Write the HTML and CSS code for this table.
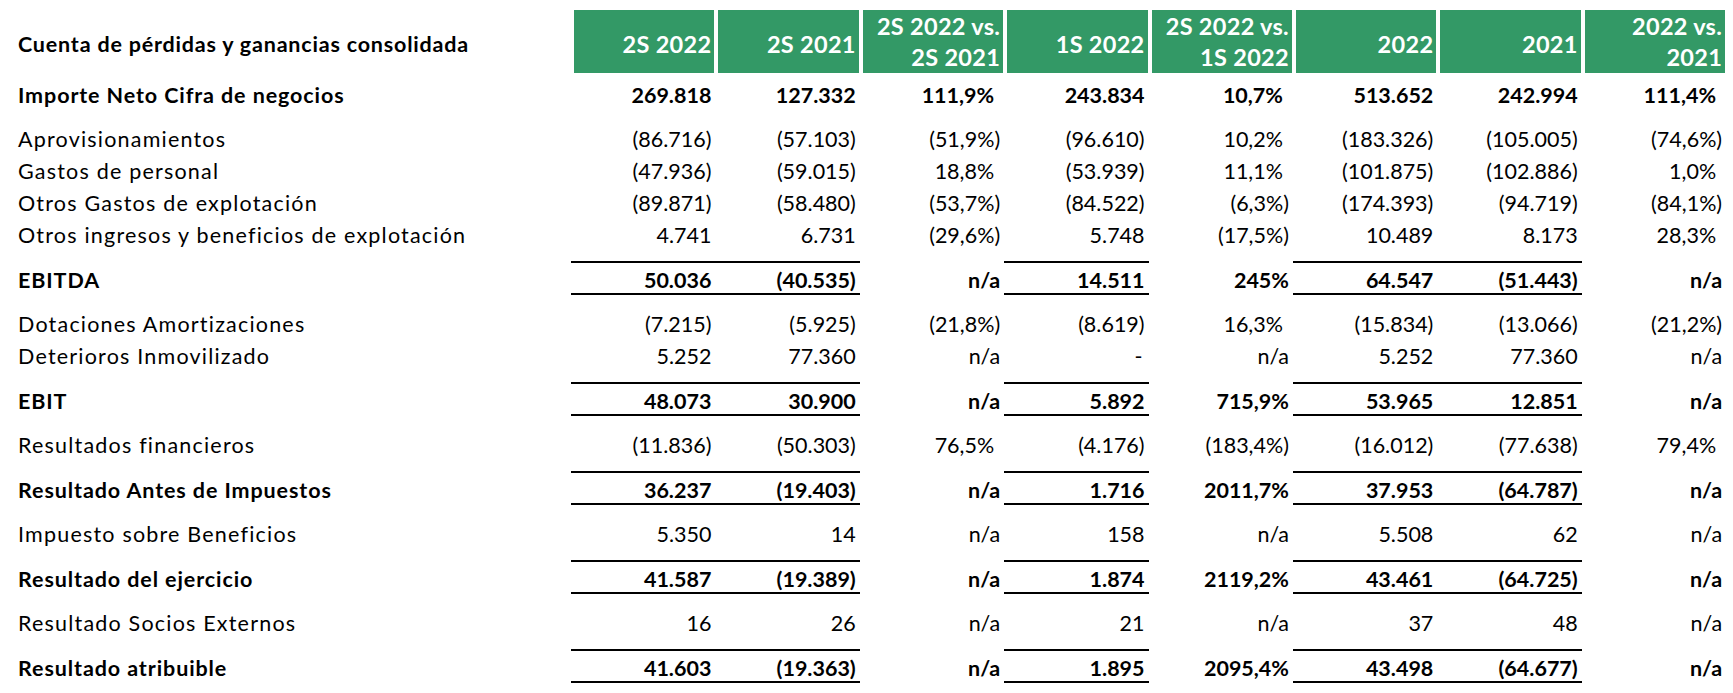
FILE: index.html
```html
<!DOCTYPE html>
<html lang="es">
<head>
<meta charset="utf-8">
<title>Cuenta de pérdidas y ganancias consolidada</title>
<link rel="stylesheet" href="styles.css">
</head>
<body>
<div class="table">
  <div class="row head">
    <div class="label title">Cuenta de pérdidas y ganancias consolidada</div>
    <div class="hc"><span>2S 2022</span></div>
    <div class="hc"><span>2S 2021</span></div>
    <div class="hc two"><span>2S 2022 vs.</span><span>2S 2021</span></div>
    <div class="hc"><span>1S 2022</span></div>
    <div class="hc two"><span>2S 2022 vs.</span><span>1S 2022</span></div>
    <div class="hc"><span>2022</span></div>
    <div class="hc"><span>2021</span></div>
    <div class="hc two"><span>2022 vs.</span><span>2021</span></div>
  </div>

  <div class="row bold first">
    <div class="label">Importe Neto Cifra de negocios</div>
    <div class="c">269.818</div><div class="c">127.332</div><div class="c pp">111,9%</div><div class="c">243.834</div><div class="c pp">10,7%</div><div class="c">513.652</div><div class="c">242.994</div><div class="c pp">111,4%</div>
  </div>

  <div class="block">
    <div class="row">
      <div class="label">Aprovisionamientos</div>
      <div class="c">(86.716)</div><div class="c">(57.103)</div><div class="c">(51,9%)</div><div class="c">(96.610)</div><div class="c pp">10,2%</div><div class="c">(183.326)</div><div class="c">(105.005)</div><div class="c">(74,6%)</div>
    </div>
    <div class="row">
      <div class="label">Gastos de personal</div>
      <div class="c">(47.936)</div><div class="c">(59.015)</div><div class="c pp">18,8%</div><div class="c">(53.939)</div><div class="c pp">11,1%</div><div class="c">(101.875)</div><div class="c">(102.886)</div><div class="c pp">1,0%</div>
    </div>
    <div class="row">
      <div class="label">Otros Gastos de explotación</div>
      <div class="c">(89.871)</div><div class="c">(58.480)</div><div class="c">(53,7%)</div><div class="c">(84.522)</div><div class="c">(6,3%)</div><div class="c">(174.393)</div><div class="c">(94.719)</div><div class="c">(84,1%)</div>
    </div>
    <div class="row">
      <div class="label">Otros ingresos y beneficios de explotación</div>
      <div class="c">4.741</div><div class="c">6.731</div><div class="c">(29,6%)</div><div class="c">5.748</div><div class="c">(17,5%)</div><div class="c">10.489</div><div class="c">8.173</div><div class="c pp">28,3%</div>
    </div>
  </div>

  <div class="row bold total">
    <div class="label">EBITDA</div>
    <div class="c u">50.036</div><div class="c u">(40.535)</div><div class="c">n/a</div><div class="c u">14.511</div><div class="c">245%</div><div class="c u">64.547</div><div class="c u">(51.443)</div><div class="c">n/a</div>
  </div>

  <div class="block">
    <div class="row">
      <div class="label">Dotaciones Amortizaciones</div>
      <div class="c">(7.215)</div><div class="c">(5.925)</div><div class="c">(21,8%)</div><div class="c">(8.619)</div><div class="c pp">16,3%</div><div class="c">(15.834)</div><div class="c">(13.066)</div><div class="c">(21,2%)</div>
    </div>
    <div class="row">
      <div class="label">Deterioros Inmovilizado</div>
      <div class="c">5.252</div><div class="c">77.360</div><div class="c">n/a</div><div class="c dash">-</div><div class="c">n/a</div><div class="c">5.252</div><div class="c">77.360</div><div class="c">n/a</div>
    </div>
  </div>

  <div class="row bold total">
    <div class="label">EBIT</div>
    <div class="c u">48.073</div><div class="c u">30.900</div><div class="c">n/a</div><div class="c u">5.892</div><div class="c">715,9%</div><div class="c u">53.965</div><div class="c u">12.851</div><div class="c">n/a</div>
  </div>

  <div class="block">
    <div class="row">
      <div class="label">Resultados financieros</div>
      <div class="c">(11.836)</div><div class="c">(50.303)</div><div class="c pp">76,5%</div><div class="c">(4.176)</div><div class="c">(183,4%)</div><div class="c">(16.012)</div><div class="c">(77.638)</div><div class="c pp">79,4%</div>
    </div>
  </div>

  <div class="row bold total">
    <div class="label">Resultado Antes de Impuestos</div>
    <div class="c u">36.237</div><div class="c u">(19.403)</div><div class="c">n/a</div><div class="c u">1.716</div><div class="c">2011,7%</div><div class="c u">37.953</div><div class="c u">(64.787)</div><div class="c">n/a</div>
  </div>

  <div class="block">
    <div class="row">
      <div class="label">Impuesto sobre Beneficios</div>
      <div class="c">5.350</div><div class="c">14</div><div class="c">n/a</div><div class="c">158</div><div class="c">n/a</div><div class="c">5.508</div><div class="c">62</div><div class="c">n/a</div>
    </div>
  </div>

  <div class="row bold total">
    <div class="label">Resultado del ejercicio</div>
    <div class="c u">41.587</div><div class="c u">(19.389)</div><div class="c">n/a</div><div class="c u">1.874</div><div class="c">2119,2%</div><div class="c u">43.461</div><div class="c u">(64.725)</div><div class="c">n/a</div>
  </div>

  <div class="block">
    <div class="row">
      <div class="label">Resultado Socios Externos</div>
      <div class="c">16</div><div class="c">26</div><div class="c">n/a</div><div class="c">21</div><div class="c">n/a</div><div class="c">37</div><div class="c">48</div><div class="c">n/a</div>
    </div>
  </div>

  <div class="row bold total">
    <div class="label">Resultado atribuible</div>
    <div class="c u">41.603</div><div class="c u">(19.363)</div><div class="c">n/a</div><div class="c u">1.895</div><div class="c">2095,4%</div><div class="c u">43.498</div><div class="c u">(64.677)</div><div class="c">n/a</div>
  </div>
</div>
</body>
</html>
```

FILE: styles.css
```css
html, body {
  margin: 0;
  padding: 0;
  background: #ffffff;
}

body {
  font-family: Lato, "Open Sans", sans-serif;
  font-size: 21.5px;
  color: #000000;
}

.table {
  padding-top: 10px;
  display: flex;
  flex-direction: column;
}

.row {
  display: grid;
  grid-template-columns: 571px repeat(8, 144.4px);
  height: 32px;
  line-height: 32px;
  white-space: nowrap;
}

.label {
  padding-left: 18px;
  letter-spacing: 1.2px;
}

.bold {
  font-weight: 700;
}

.bold .label {
  letter-spacing: 0.9px;
}

.c {
  text-align: right;
  padding-right: 4px;
}

.c.pp {
  padding-right: 10px;
}

.c.dash {
  padding-right: 6px;
}

/* header */
.row.head {
  height: 63px;
  line-height: 31px;
}

.title {
  font-weight: 700;
  padding-top: 6px;
  display: flex;
  align-items: center;
  letter-spacing: 0.8px;
}

.hc {
  background: #339966;
  color: #ffffff;
  font-weight: 700;
  font-size: 23.5px;
  letter-spacing: 0.3px;
  margin: 0 1px 0 3px;
  padding: 6px 3px 0 0;
  display: flex;
  flex-direction: column;
  justify-content: center;
  align-items: flex-end;
}

.hc.two {
  padding-top: 0;
}

.row.first {
  margin-top: 6px;
}

.block {
  display: flex;
  flex-direction: column;
  margin: 12px 0 10px;
}

.row.total {
  height: 34px;
  line-height: 25px;
}

.row.total > div {
  box-sizing: border-box;
  padding-top: 5px;
  border-top: 2px solid transparent;
  border-bottom: 2px solid transparent;
}

.row.total > .c.u {
  border-top-color: #000000;
  border-bottom-color: #000000;
}

.row.total + .block {
  margin-top: 13px;
}
```
